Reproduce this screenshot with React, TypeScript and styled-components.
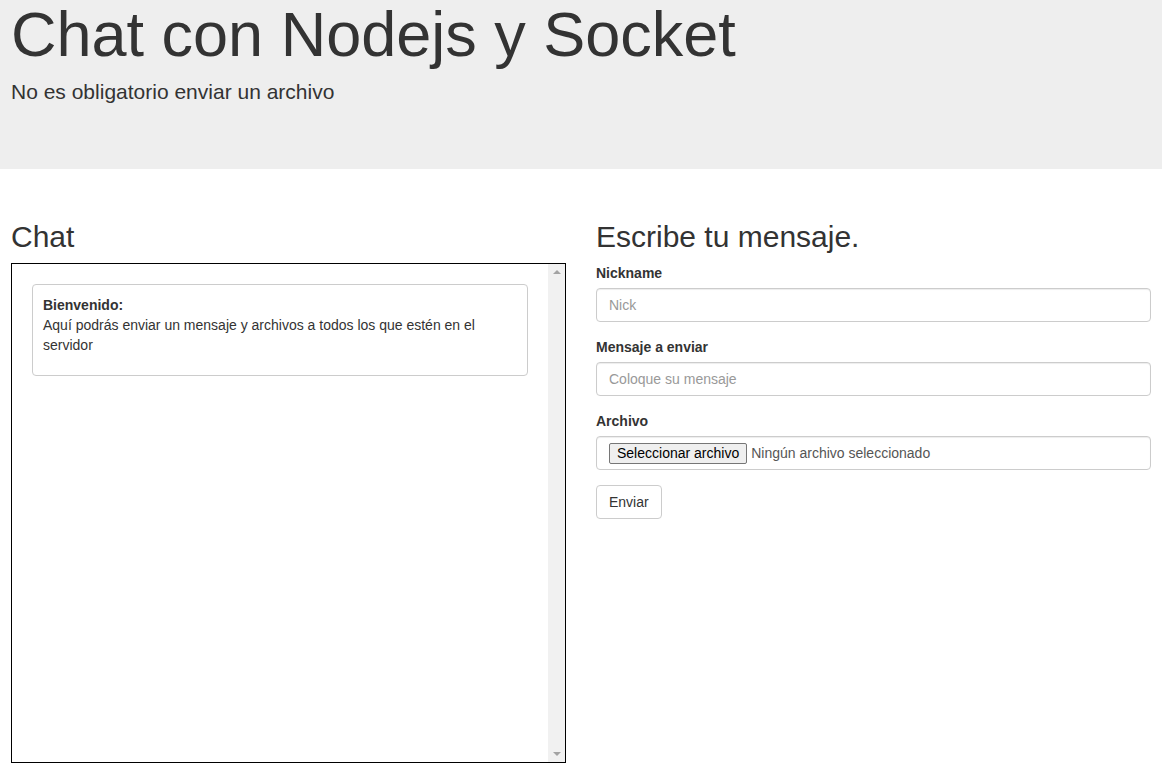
import React from "react";
import styled, { createGlobalStyle } from "styled-components";

const GlobalStyle = createGlobalStyle`
  * { box-sizing: border-box; }
  body {
    margin: 0;
    background: #fff;
    color: #333;
    font-family: "Liberation Sans", Arial, Helvetica, sans-serif;
    font-size: 14px;
    line-height: 1.42857143;
  }
`;

export default function App() {
  return (
    <>
      <GlobalStyle />
      <Jumbotron>
        <Title>Chat con Nodejs y Socket</Title>
        <Lead>No es obligatorio enviar un archivo</Lead>
      </Jumbotron>
      <Row>
        <Column>
          <SectionTitle>Chat</SectionTitle>
          <ChatBox>
            <Messages>
              <Panel>
                <PanelText>
                  <strong>Bienvenido:</strong>
                  <br />
                  Aquí podrás enviar un mensaje y archivos a todos los que estén en el servidor
                </PanelText>
              </Panel>
            </Messages>
            <Scrollbar>
              <Arrow dir="up" />
              <Arrow dir="down" />
            </Scrollbar>
          </ChatBox>
        </Column>
        <Column>
          <SectionTitle>Escribe tu mensaje.</SectionTitle>
          <FormGroup>
            <Label>Nickname</Label>
            <Input placeholder="Nick" />
          </FormGroup>
          <FormGroup>
            <Label>Mensaje a enviar</Label>
            <Input placeholder="Coloque su mensaje" />
          </FormGroup>
          <FormGroup>
            <Label>Archivo</Label>
            <FileBox>
              <FileButton type="button">Seleccionar archivo</FileButton>
              <FileName>Ningún archivo seleccionado</FileName>
            </FileBox>
          </FormGroup>
          <SendButton type="button">Enviar</SendButton>
        </Column>
      </Row>
    </>
  );
}

const Jumbotron = styled.div`
  background: #eee;
  height: 169px;
  padding: 0 11px;
  margin-bottom: 30px;
`;

const Title = styled.h1`
  margin: 0 0 10px;
  font-size: 63px;
  font-weight: 500;
  line-height: 1.1;
`;

const Lead = styled.p`
  margin: -2px 0 0;
  font-size: 21px;
  font-weight: 200;
  line-height: 30px;
`;

const Row = styled.div`
  display: grid;
  grid-template-columns: 555px 555px;
  column-gap: 30px;
  padding: 0 11px;
`;

const Column = styled.div`
  display: flex;
  flex-direction: column;
  align-items: flex-start;
`;

const SectionTitle = styled.h2`
  margin: 21px 0 10px;
  font-size: 30px;
  font-weight: 500;
  line-height: 33px;
`;

const ChatBox = styled.div`
  width: 100%;
  height: 500px;
  border: 1px solid #000;
  display: flex;
`;

const Messages = styled.div`
  flex: 1;
  padding: 20px;
`;

const Panel = styled.div`
  border: 1px solid #ccc;
  border-radius: 4px;
  padding: 10px;
`;

const PanelText = styled.p`
  margin: 0 0 10px;
`;

const Scrollbar = styled.div`
  width: 17px;
  background: #f1f1f1;
  display: flex;
  flex-direction: column;
  justify-content: space-between;
  align-items: center;
  padding: 6px 0;
`;

const Arrow = styled.span<{ dir: "up" | "down" }>`
  width: 0;
  height: 0;
  border-left: 4px solid transparent;
  border-right: 4px solid transparent;
  ${(p) =>
    p.dir === "up"
      ? "border-bottom: 4px solid #a3a3a3;"
      : "border-top: 4px solid #a3a3a3;"}
`;

const FormGroup = styled.div`
  width: 100%;
  margin-bottom: 15px;
`;

const Label = styled.label`
  display: inline-block;
  margin-bottom: 5px;
  font-weight: 700;
  line-height: 20px;
`;

const Input = styled.input`
  display: block;
  width: 100%;
  height: 34px;
  padding: 6px 12px;
  font-family: inherit;
  font-size: 14px;
  line-height: 1.42857143;
  color: #555;
  background: #fff;
  border: 1px solid #ccc;
  border-radius: 4px;
  box-shadow: inset 0 1px 1px rgba(0, 0, 0, 0.075);
  outline: none;

  &::placeholder {
    color: #999;
  }
`;

const FileBox = styled.div`
  display: flex;
  align-items: center;
  gap: 4px;
  width: 100%;
  height: 34px;
  padding: 0 12px;
  border: 1px solid #ccc;
  border-radius: 4px;
  box-shadow: inset 0 1px 1px rgba(0, 0, 0, 0.075);
  color: #555;
`;

const FileButton = styled.button`
  height: 21px;
  padding: 0 7px;
  font-family: inherit;
  font-size: 14px;
  color: #000;
  background: #efefef;
  border: 1px solid #767676;
  border-radius: 2px;
`;

const FileName = styled.span`
  font-size: 14px;
`;

const SendButton = styled.button`
  height: 34px;
  padding: 6px 12px;
  font-family: inherit;
  font-size: 14px;
  line-height: 1.42857143;
  color: #333;
  background: #fff;
  border: 1px solid #ccc;
  border-radius: 4px;
`;
